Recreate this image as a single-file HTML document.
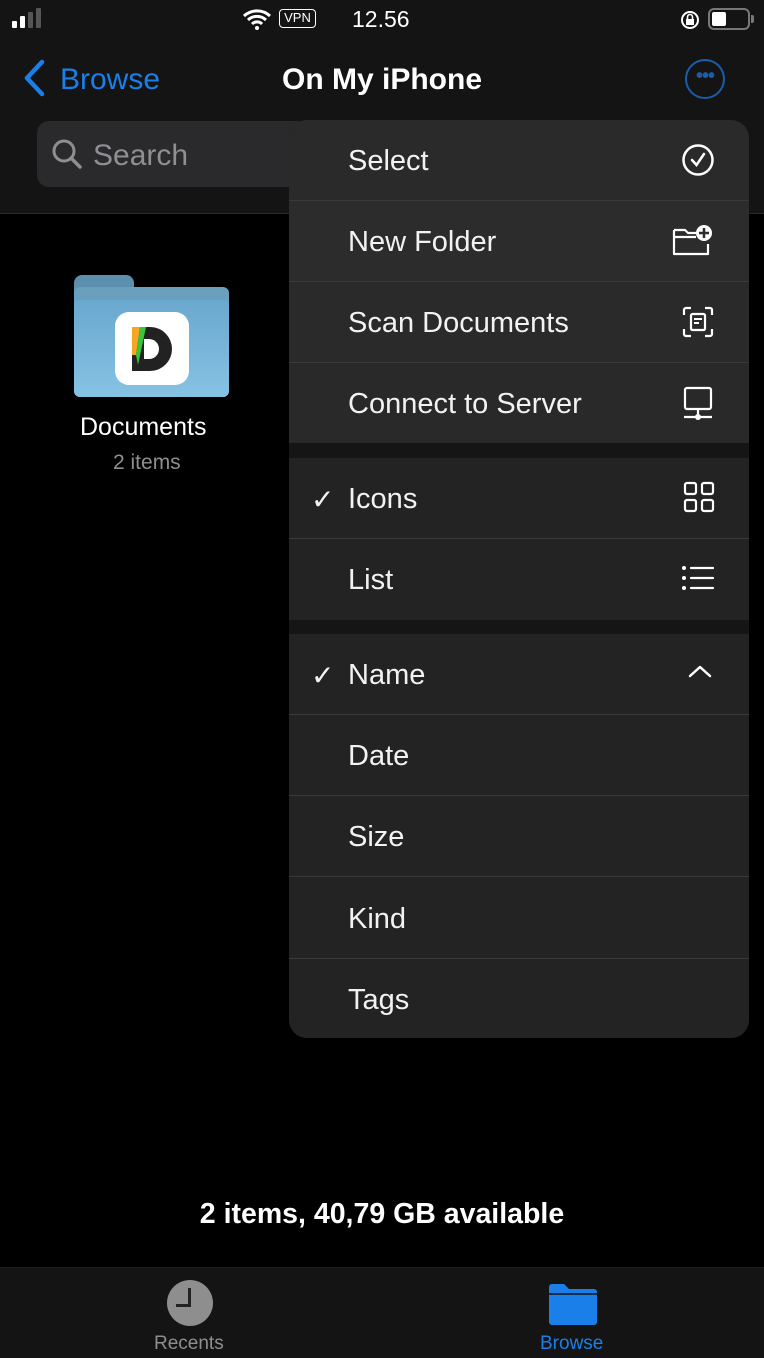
<!DOCTYPE html><html><head><style>
*{margin:0;padding:0;box-sizing:border-box}
body{width:764px;height:1358px;background:#000;font-family:"Liberation Sans",sans-serif;position:relative;overflow:hidden;color:#fff}
.a{position:absolute}
.hdr{left:0;top:0;width:764px;height:214px;background:#141414;border-bottom:1px solid #2a2a2a}
.menu{left:289px;top:120px;width:460px;height:918px;border-radius:18px;overflow:hidden;background:#222}
.row{position:absolute;left:0;width:460px;height:81px;border-bottom:1.5px solid #3a3a3a;background:#232323}
.row span{position:absolute;left:59px;top:25px;font-size:29px;color:#f2f2f2}
.row .ck{left:22px;font-size:28px}
.row svg{position:absolute;right:34px;top:23px}
.gap{position:absolute;left:0;width:460px;background:#151515}
</style></head><body>
<div class="a hdr"></div>
<div class="a" style="left:12px;top:21px;width:5px;height:7px;background:#fff;border-radius:1px"></div>
<div class="a" style="left:20px;top:16px;width:5px;height:12px;background:#fff;border-radius:1px"></div>
<div class="a" style="left:28px;top:12px;width:5px;height:16px;background:#555;border-radius:1px"></div>
<div class="a" style="left:36px;top:8px;width:5px;height:20px;background:#555;border-radius:1px"></div>
<svg class="a" style="left:242px;top:8px" width="30" height="22" viewBox="0 0 30 22"><path d="M2 8a19 19 0 0 1 26 0M6 12a13 13 0 0 1 18 0M10 16a7 7 0 0 1 10 0" stroke="#fff" stroke-width="3" fill="none"/><circle cx="15" cy="20" r="2" fill="#fff"/></svg>
<div class="a" style="left:279px;top:9px;width:37px;height:19px;border:1.5px solid #fff;border-radius:4px;font-size:13px;text-align:center;line-height:16px">VPN</div>
<div class="a" style="left:352px;top:6px;font-size:23px">12.56</div>
<svg class="a" style="left:679px;top:9px" width="22" height="22" viewBox="0 0 22 22"><circle cx="11" cy="11" r="8" stroke="#fff" stroke-width="2" fill="none"/><rect x="7" y="10" width="8" height="6" fill="#fff"/><path d="M8.5 10V8a2.5 2.5 0 0 1 5 0v2" stroke="#fff" stroke-width="1.6" fill="none"/></svg>
<div class="a" style="left:708px;top:8px;width:42px;height:22px;border:2px solid #777;border-radius:6px"><div style="margin:2px;width:14px;height:14px;background:#fff;border-radius:2px"></div></div>
<div class="a" style="left:751px;top:15px;width:3px;height:8px;background:#777;border-radius:0 2px 2px 0"></div>
<svg class="a" style="left:22px;top:58px" width="24" height="40" viewBox="0 0 24 40"><path d="M20 4L5 20l15 16" stroke="#1a7fe8" stroke-width="4.5" fill="none" stroke-linecap="round" stroke-linejoin="round"/></svg>
<div class="a" style="left:60px;top:63px;font-size:30px;color:#1a7fe8">Browse</div>
<div class="a" style="left:282px;top:63px;font-size:30px;font-weight:bold">On My iPhone</div>
<div class="a" style="left:685px;top:59px;width:40px;height:40px;border:2.5px solid #1a5da8;border-radius:50%;text-align:center;color:#1a5da8;font-size:20px;line-height:30px;letter-spacing:-1px;font-weight:bold">•••</div>
<div class="a" style="left:37px;top:121px;width:300px;height:66px;background:#2a2a2c;border-radius:12px"></div>
<svg class="a" style="left:50px;top:137px" width="34" height="34" viewBox="0 0 34 34"><circle cx="14" cy="14" r="10" stroke="#8e8e93" stroke-width="3" fill="none"/><path d="M21 21l9 9" stroke="#8e8e93" stroke-width="3.5" stroke-linecap="round"/></svg>
<div class="a" style="left:93px;top:139px;font-size:30px;color:#8e8e93">Search</div>
<div class="a" style="left:74px;top:275px;width:60px;height:30px;background:#5b8fad;border-radius:8px 8px 0 0"></div>
<div class="a" style="left:74px;top:287px;width:155px;height:110px;background:#6a9fbd;border-radius:6px"></div>
<div class="a" style="left:74px;top:300px;width:155px;height:97px;background:linear-gradient(#6aa8cf,#86c2e3);border-radius:4px 4px 6px 6px"></div>
<div class="a" style="left:115px;top:312px;width:74px;height:73px;background:#fff;border-radius:14px"></div>
<svg class="a" style="left:130px;top:325px" width="46" height="48" viewBox="0 0 46 48"><path d="M2 2h18a21 21 0 0 1 0 44H2z" fill="#222"/><path d="M14 14h5a10 10 0 0 1 0 20h-5z" fill="#fff"/><path d="M2 2h8L6 30H2z" fill="#f5a623"/><path d="M10 2h6L8 40 6 30z" fill="#3bc43b"/></svg>
<div class="a" style="left:80px;top:413px;font-size:25px">Documents</div>
<div class="a" style="left:113px;top:451px;font-size:21px;color:#8e8e93">2 items</div>
<div class="a menu">
<div class="row" style="top:0;background:#2a2a2a"><span>Select</span><svg width="34" height="34" viewBox="0 0 34 34"><circle cx="17" cy="17" r="14.5" stroke="#fff" stroke-width="2.5" fill="none"/><path d="M11 17l4.5 5L23 11" stroke="#fff" stroke-width="2.5" fill="none" stroke-linecap="round"/></svg></div>
<div class="row" style="top:81px;background:#2c2c2c"><span>New Folder</span><svg width="44" height="34" viewBox="0 0 44 34"><path d="M3 6h11l3 3h9M3 6v24h34V20M3 13h22" stroke="#fff" stroke-width="2.2" fill="none" stroke-linejoin="round"/><circle cx="33" cy="9" r="8" fill="#fff"/><path d="M33 4v10M28 9h10" stroke="#2c2c2c" stroke-width="2.5"/></svg></div>
<div class="row" style="top:162px;background:#2a2a2a"><span>Scan Documents</span><svg width="34" height="34" viewBox="0 0 34 34"><path d="M3 10V5a2 2 0 0 1 2-2h5M24 3h5a2 2 0 0 1 2 2v5M31 24v5a2 2 0 0 1-2 2h-5M10 31H5a2 2 0 0 1-2-2v-5" stroke="#fff" stroke-width="2.2" fill="none"/><rect x="10" y="9" width="14" height="16" rx="1.5" stroke="#fff" stroke-width="2.2" fill="none"/><path d="M13 14h8M13 18h5" stroke="#fff" stroke-width="2"/></svg></div>
<div class="row" style="top:243px;height:80px;border:none;background:#292929"><span>Connect to Server</span><svg width="34" height="36" viewBox="0 0 34 36"><rect x="4" y="2" width="26" height="21" rx="2" stroke="#fff" stroke-width="2.2" fill="none"/><path d="M17 23v8M3 31h28" stroke="#fff" stroke-width="2.2"/><circle cx="17" cy="31" r="3" fill="#fff"/></svg></div>
<div class="gap" style="top:323px;height:15px"></div>
<div class="row" style="top:338px"><span class="ck">✓</span><span>Icons</span><svg width="32" height="32" viewBox="0 0 32 32"><g stroke="#fff" stroke-width="2.2" fill="none"><rect x="2" y="2" width="11" height="11" rx="2"/><rect x="19" y="2" width="11" height="11" rx="2"/><rect x="2" y="19" width="11" height="11" rx="2"/><rect x="19" y="19" width="11" height="11" rx="2"/></g></svg></div>
<div class="row" style="top:419px;height:81px;border:none"><span>List</span><svg width="34" height="32" viewBox="0 0 34 32"><g fill="#fff"><circle cx="3" cy="6" r="2"/><circle cx="3" cy="16" r="2"/><circle cx="3" cy="26" r="2"/></g><path d="M10 6h22M10 16h22M10 26h22" stroke="#fff" stroke-width="2.2" stroke-linecap="round"/></svg></div>
<div class="gap" style="top:500px;height:14px"></div>
<div class="row" style="top:514px"><span class="ck">✓</span><span>Name</span><svg width="30" height="30" viewBox="0 0 30 30"><path d="M5 19l10-9 10 9" stroke="#fff" stroke-width="2.5" fill="none" stroke-linecap="round" stroke-linejoin="round"/></svg></div>
<div class="row" style="top:595px"><span>Date</span></div>
<div class="row" style="top:676px"><span>Size</span></div>
<div class="row" style="top:758px"><span>Kind</span></div>
<div class="row" style="top:839px;height:79px;border:none"><span>Tags</span></div>
</div>
<div class="a" style="left:0;top:1198px;width:764px;text-align:center;font-size:28.5px;font-weight:bold">2 items, 40,79 GB available</div>
<div class="a" style="left:0;top:1267px;width:764px;height:91px;background:#141414;border-top:1px solid #222"></div>
<div class="a" style="left:167px;top:1280px;width:46px;height:46px;border-radius:50%;background:#8e8e8e"></div>
<div class="a" style="left:188px;top:1288px;width:3px;height:18px;background:#222"></div>
<div class="a" style="left:176px;top:1304px;width:15px;height:3px;background:#222"></div>
<div class="a" style="left:154px;top:1333px;font-size:19px;color:#8e8e8e">Recents</div>
<svg class="a" style="left:549px;top:1283px" width="48" height="42" viewBox="0 0 48 42"><path d="M0 4a3 3 0 0 1 3-3h12l5 5h25a3 3 0 0 1 3 3v30a3 3 0 0 1-3 3H3a3 3 0 0 1-3-3z" fill="#1a7fe8"/><path d="M0 11h48" stroke="#141414" stroke-width="1.5"/></svg>
<div class="a" style="left:540px;top:1333px;font-size:19px;color:#1a7fe8">Browse</div>
</body></html>
